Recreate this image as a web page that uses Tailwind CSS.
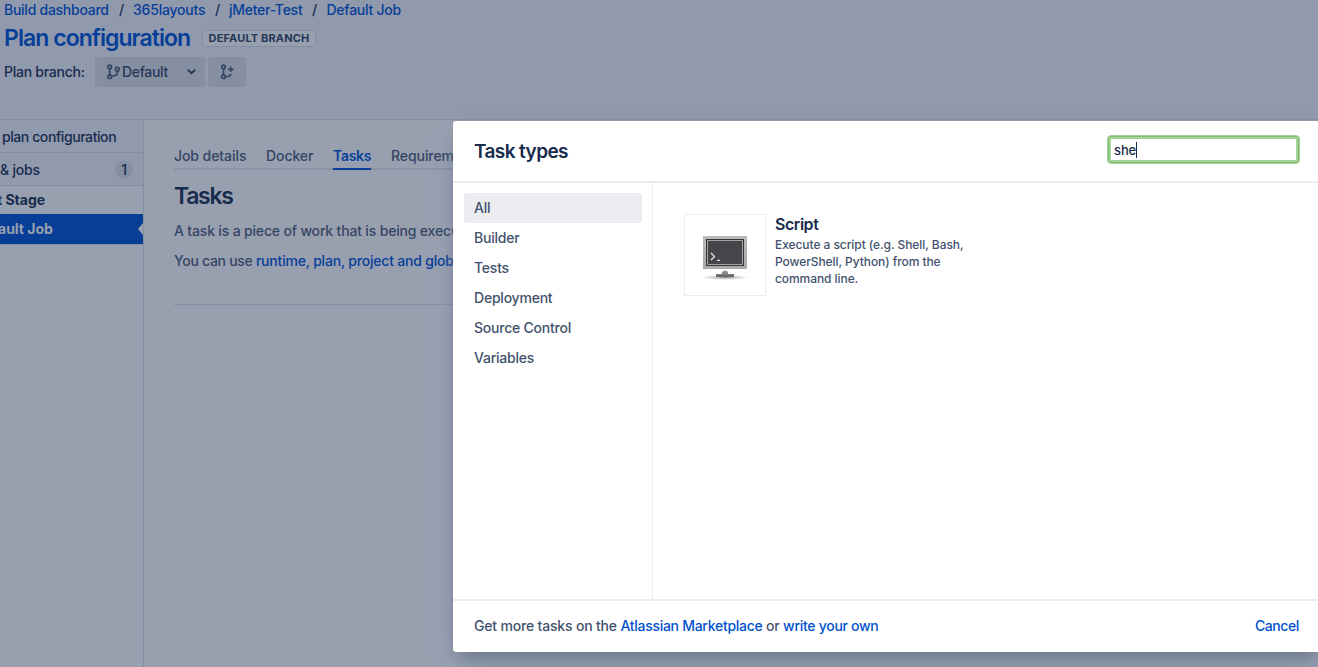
<!DOCTYPE html>
<html lang="en">
<head>
<meta charset="utf-8">
<title>Plan configuration</title>
<script src="https://cdn.jsdelivr.net/npm/@tailwindcss/browser@4"></script>
</head>
<body class="relative h-[667px] w-[1318px] overflow-hidden bg-[#98a0b0] font-[Inter,'Liberation_Sans',sans-serif] text-sm leading-5 font-[450] tracking-[-0.22px] text-[#344563] whitespace-nowrap">
<header class="h-[120px] border-b border-[#858fa2] bg-[#9199ac] pl-1 text-[#172b4d]">
  <nav class="flex h-5 items-center text-[#073f98]">
    <a class="w-[115px] tracking-[-0.26px]">Build dashboard</a><span class="w-[14px] text-[#172b4d]">/</span><a class="w-[82px] tracking-[-0.2px]">365layouts</a><span class="w-[14px] text-[#172b4d]">/</span><a class="w-[83px] tracking-[-0.26px]">jMeter-Test</a><span class="w-[14.5px] text-[#172b4d]">/</span><a class="tracking-[-0.25px]">Default Job</a>
  </nav>
  <div class="flex h-9 items-center">
    <h1 class="w-[198px] text-[23px] font-semibold tracking-[-0.95px] text-[#073f98]">Plan configuration</h1>
    <span class="flex h-[17px] w-[114px] items-center justify-center rounded-[3px] border border-[#838ea2] bg-[#98a0b0] text-[11px] font-bold tracking-[0.15px] text-[#253858]">DEFAULT BRANCH</span>
  </div>
  <div class="mt-px flex h-[30px] items-center">
    <span class="w-[91px] tracking-[-0.25px]">Plan branch:</span>
    <button class="flex h-[30px] w-[110px] items-center rounded-[3px] bg-[#858fa1] pl-3 text-[#253858]">
      <svg class="h-4 w-[15px] shrink-0" viewBox="0 0 15 16" fill="none" stroke="#344563" stroke-width="1.7"><circle cx="2.7" cy="3" r="1.8"/><circle cx="2.7" cy="12.7" r="1.8"/><circle cx="10.3" cy="5.2" r="1.8"/><path d="M2.7 5v6M10.3 7v1.7q0 2.3-2.3 2.8L4.7 12.5"/></svg>
      <span class="w-[65px] text-left tracking-[-0.35px]">Default</span>
      <svg class="h-[6px] w-[9px]" viewBox="0 0 9 6" fill="none" stroke="#253858" stroke-width="1.9" stroke-linecap="round" stroke-linejoin="round"><path d="M1.4 1.3 4.5 4.3l3.1-3"/></svg>
    </button>
    <button class="ml-[3px] flex h-[30px] w-[38px] items-center justify-center rounded-[3px] bg-[#858fa1]">
      <svg class="h-4 w-[15px]" viewBox="0 0 15 16" fill="none" stroke="#344563" stroke-width="1.7"><circle cx="3.5" cy="3" r="1.8"/><circle cx="3.5" cy="12.7" r="1.8"/><path d="M3.5 5v6M5.5 12.5H8q2.5-.3 2.7-2.8M10.7 2.5v5.6M7.9 5.3h5.6"/></svg>
    </button>
  </div>
</header>
<div class="flex h-[547px]">
  <aside class="w-[144px] border-r border-[#858fa2] text-[#172b4d]">
    <div class="flex h-[33px] items-center border-b border-[#858fa2] bg-[#9199ac] pl-[2px] pt-px tracking-[-0.42px]">plan configuration</div>
    <div class="flex h-[33px] items-center justify-between border-b border-[#858fa2] bg-[#9199ac] pt-px pr-[10px]"><span>&amp; jobs</span><span class="flex size-[18px] items-center justify-center rounded-full bg-[#858fa1]">1</span></div>
    <div class="flex h-7 items-center font-bold tracking-normal"><span class="-ml-[3px]">t Stage</span></div>
    <div class="flex h-[30px] items-center justify-between bg-[#083f96] font-bold tracking-normal text-[#98a0b0]"><span class="-ml-[2px]">ault Job</span><svg class="h-3 w-[5px]" viewBox="0 0 5 12"><path d="M5 0v12L0 6z" fill="#98a0b0"/></svg></div>
    <div class="border-t border-[#858fa2]"></div>
  </aside>
  <main class="ml-[30px] w-[279px] overflow-hidden">
    <nav class="flex h-[50px] gap-5 border-b-2 border-[#8993a6] pt-[26px] font-medium tracking-[-0.07px]">
      <a class="w-[72px] shrink-0">Job details</a><a class="w-[47px] shrink-0">Docker</a><a class="h-6 w-[38px] shrink-0 border-b-2 border-[#073f98] font-semibold tracking-[-0.3px] text-[#073f98]">Tasks</a><a>Requirements</a>
    </nav>
    <h2 class="mt-[14px] text-[23px] leading-6 font-semibold tracking-[-1.3px] text-[#172b4d]">Tasks</h2>
    <p class="mt-[13px] tracking-[-0.17px]">A task is a piece of work that is being executed</p>
    <p class="mt-[10px] tracking-[-0.29px]">You can use <a class="font-medium tracking-[-0.2px] text-[#073f98]">runtime, plan, project and global variables</a></p>
    <div class="mt-[33px] border-t border-[#858fa2]"></div>
  </main>
</div>
<section class="absolute top-[121px] left-[453px] flex h-[531px] w-[870px] flex-col rounded-[3px] bg-white pr-[5px] text-[#42526e] shadow-[0_0_1px_#6f7b91,0_12px_20px_-6px_#64728a]">
  <header class="flex h-[62px] shrink-0 items-center justify-between border-b-2 border-[#ebecf0] pr-[18px] pl-[21px]">
    <h2 class="pt-[2px] text-[19px] font-semibold tracking-[-0.6px] text-[#172b4d]">Task types</h2>
    <div class="-mt-[3px] flex h-[29px] w-[193px] items-center rounded-[4px] border border-[#9fcf92] bg-white pl-[6px] text-[13px] tracking-[-0.1px] text-[#172b4d] shadow-[inset_0_0_0_1px_#84b978,inset_0_0_0_3px_#a5d497]"><span>she</span><span class="h-4 w-px bg-[#172b4d]"></span></div>
  </header>
  <div class="flex flex-1">
    <nav class="w-[200px] border-r border-[#ebecf0] pt-[10px] pl-[11px]">
      <a class="flex h-[30px] w-[178px] items-center rounded-[3px] bg-[#ebecf0] pl-[10px]">All</a>
      <a class="flex h-[30px] items-center pl-[10px]">Builder</a>
      <a class="flex h-[30px] items-center pl-[10px]">Tests</a>
      <a class="flex h-[30px] items-center pl-[10px]">Deployment</a>
      <a class="flex h-[30px] items-center pl-[10px]">Source Control</a>
      <a class="flex h-[30px] items-center pl-[10px]">Variables</a>
    </nav>
    <div class="flex gap-[9px] pt-[31px] pl-[31px]">
      <div class="flex size-[82px] items-center justify-center border border-[#ebecf0]">
        <svg class="mt-2 h-[48px] w-[48px]" viewBox="0 0 48 48">
          <defs>
            <linearGradient id="frame" x2="0" y2="1"><stop stop-color="#b9bbb9"/><stop offset="1" stop-color="#a9aba9"/></linearGradient>
            <linearGradient id="stand" x2="0" y2="1"><stop stop-color="#a0a0a0"/><stop offset="1" stop-color="#606162"/></linearGradient>
            <radialGradient id="shade"><stop stop-color="#8b8b8b"/><stop offset="1" stop-color="#ddd" stop-opacity="0.3"/></radialGradient>
          </defs>
          <ellipse cx="24" cy="42.5" rx="22" ry="2.3" fill="url(#shade)"/>
          <path d="M15 39h6v-2q1-1.5 3-1.5t3 1.5v2h6v3H15z" fill="url(#stand)"/>
          <path d="M2 1h44v33H2z" fill="url(#frame)"/>
          <path d="M5 4h38v27H5z" fill="#343638"/>
          <path d="M6.5 5.5h35v24h-35z" fill="#444649" stroke="#a1a49f"/>
          <path d="m10 18 3.5 3.5L10 25M16 25.3h3" fill="none" stroke="#e3e4e4" stroke-width="1.3"/>
        </svg>
      </div>
      <div>
        <h3 class="text-base leading-5 font-semibold tracking-[-0.45px] text-[#172b4d]">Script</h3>
        <p class="mt-[2px] text-xs leading-[17px] tracking-[-0.07px]">Execute a script (e.g. Shell, Bash,<br>PowerShell, Python) from the<br>command line.</p>
      </div>
    </div>
  </div>
  <footer class="flex h-[53px] shrink-0 items-center justify-between border-t-2 border-[#ebecf0] pr-[19px] pb-[2px] pl-[21px]">
    <p class="tracking-[-0.18px]">Get more tasks on the <a class="font-medium tracking-[-0.28px] text-[#0052cc]">Atlassian Marketplace</a> or <a class="font-medium tracking-[-0.28px] text-[#0052cc]">write your own</a></p>
    <a class="tracking-[-0.4px] text-[#0052cc]">Cancel</a>
  </footer>
</section>
</body>
</html>
